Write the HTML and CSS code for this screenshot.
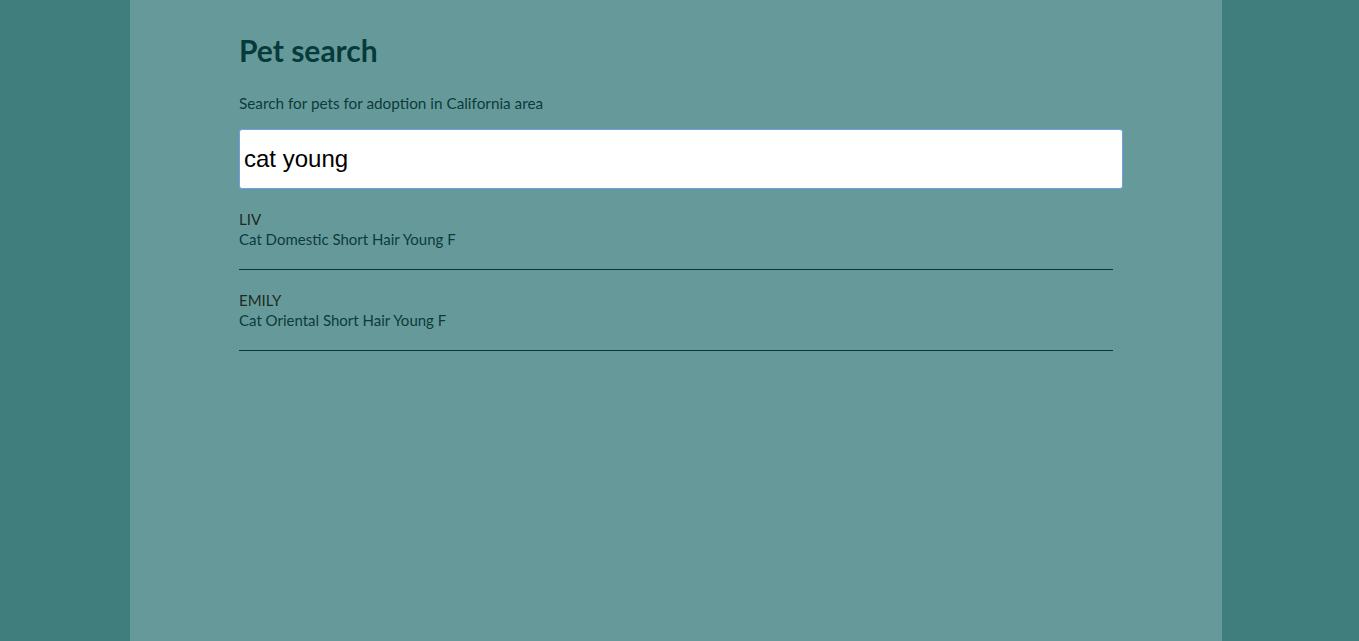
FILE: index.html
```html
<!DOCTYPE html>
<html>
<head>
<meta charset="utf-8">
<link rel="stylesheet" href="styles.css">
</head>
<body>
<div class="page">
  <h1 class="title">Pet search</h1>
  <p class="subtitle">Search for pets for adoption in California area</p>
  <input class="search" type="text" value="cat young">
  <ul class="results">
    <li class="pet">
      <div class="pet-name">LIV</div>
      <div class="pet-desc">Cat Domestic Short Hair Young F</div>
    </li>
    <li class="pet">
      <div class="pet-name">EMILY</div>
      <div class="pet-desc">Cat Oriental Short Hair Young F</div>
    </li>
  </ul>
</div>
</body>
</html>
```
FILE: styles.css
```css
html, body {
  margin: 0;
  padding: 0;
  height: 100%;
}
body {
  background: #3f7e7c;
  font-family: "Lato", "Noto Sans", sans-serif;
}
.page {
  box-sizing: border-box;
  margin-left: 130px;
  width: 1092px;
  min-height: 100%;
  background: #669a9a;
  padding: 28px 109px 20px;
}
.title {
  margin: 0;
  font-size: 30px;
  font-weight: 700;
  color: #063b3b;
  line-height: 44px;
}
.subtitle {
  margin: 21px 0 16px;
  font-size: 15.3px;
  color: #0d3a3a;
  line-height: 20px;
}
.search {
  display: block;
  box-sizing: border-box;
  width: 884px;
  height: 60px;
  margin: 0;
  padding: 0 4px;
  border: 1px solid #6f9fe6;
  border-radius: 3px;
  outline: none;
  background: #fff;
  font-family: "Liberation Sans", Arial, sans-serif;
  font-size: 24px;
  color: #000;
}
.results {
  list-style: none;
  margin: 20px 0 0;
  padding: 0;
}
.pet {
  height: 60px;
  margin-bottom: 20px;
  border-bottom: 1px solid #083535;
  font-size: 15px;
  line-height: 20px;
}
.pet-name {
  color: #1c2b1f;
}
.pet-desc {
  color: #0d3a3a;
}
```
